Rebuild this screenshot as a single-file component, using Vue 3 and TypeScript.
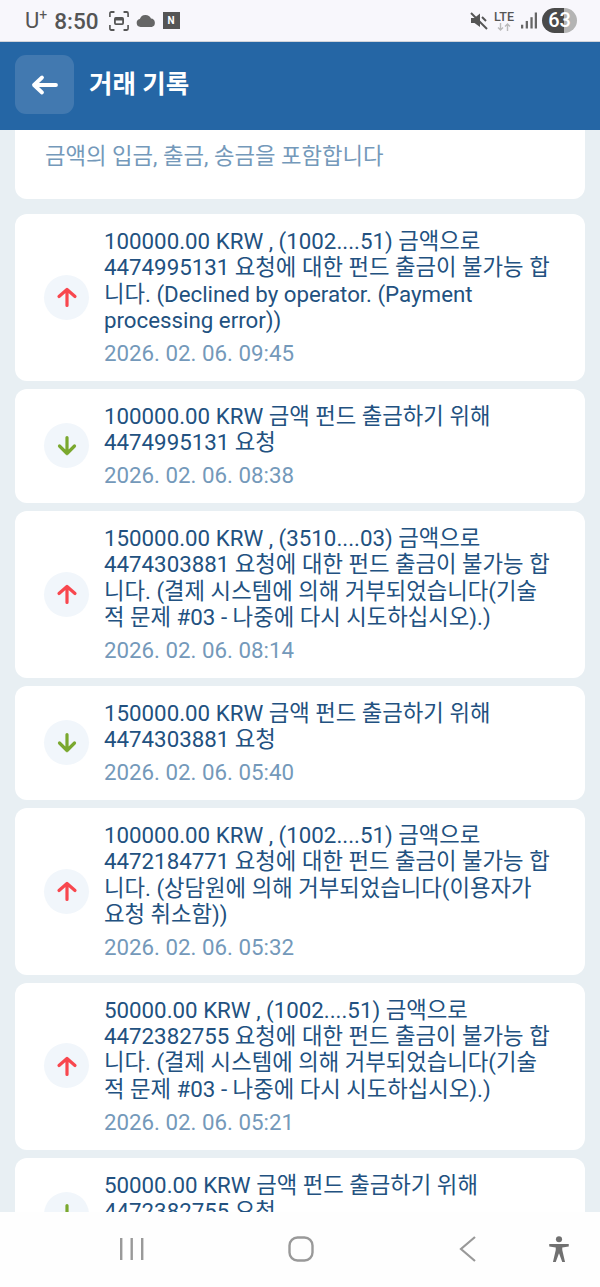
<script setup lang="ts">
interface Tx {
  kind: 'out' | 'in';
  text: string;
  date: string;
}

const items: Tx[] = [
  { kind: 'out', text: '100000.00 KRW , (1002....51) 금액으로 4474995131 요청에 대한 펀드 출금이 불가능 합니다. (Declined by operator. (Payment processing error))', date: '2026. 02. 06. 09:45' },
  { kind: 'in', text: '100000.00 KRW 금액 펀드 출금하기 위해 4474995131 요청', date: '2026. 02. 06. 08:38' },
  { kind: 'out', text: '150000.00 KRW , (3510....03) 금액으로 4474303881 요청에 대한 펀드 출금이 불가능 합니다. (결제 시스템에 의해 거부되었습니다(기술적 문제 #03 - 나중에 다시 시도하십시오).)', date: '2026. 02. 06. 08:14' },
  { kind: 'in', text: '150000.00 KRW 금액 펀드 출금하기 위해 4474303881 요청', date: '2026. 02. 06. 05:40' },
  { kind: 'out', text: '100000.00 KRW , (1002....51) 금액으로 4472184771 요청에 대한 펀드 출금이 불가능 합니다. (상담원에 의해 거부되었습니다(이용자가 요청 취소함))', date: '2026. 02. 06. 05:32' },
  { kind: 'out', text: '50000.00 KRW , (1002....51) 금액으로 4472382755 요청에 대한 펀드 출금이 불가능 합니다. (결제 시스템에 의해 거부되었습니다(기술적 문제 #03 - 나중에 다시 시도하십시오).)', date: '2026. 02. 06. 05:21' },
  { kind: 'in', text: '50000.00 KRW 금액 펀드 출금하기 위해 4472382755 요청', date: '2026. 02. 06. 05:10' },
];
</script>

<template>
  <div class="screen">
    <div class="status">
      <div class="status-left">
        <span class="carrier">U<sup>+</sup></span>
        <span class="clock">8:50</span>
        <svg class="ic" width="20" height="20" viewBox="0 0 22 20" preserveAspectRatio="none" fill="none" stroke="#555" stroke-width="1.8">
          <path d="M1 6V2.500Q1 1 2.500 1H6M16 1h3.500Q21 1 21 2.500V6M21 14v3.500Q21 19 19.500 19H16M6 19H2.500Q1 19 1 17.500V14" />
          <rect x="5.500" y="6" width="11" height="8" rx="2" fill="#555" stroke="none" />
          <rect x="7.500" y="9.500" width="7" height="2.800" fill="#f8f7fc" stroke="none" />
        </svg>
        <svg class="ic" width="20" height="13" viewBox="0 0 20 13">
          <path d="M4.500 13A4 4 0 0 1 3.800 5.100 6 6 0 0 1 15 4.600 4.300 4.300 0 0 1 15.800 13Z" fill="#666" />
        </svg>
        <span class="n-badge">N</span>
      </div>
      <div class="status-right">
        <svg width="18" height="18" viewBox="0 0 18 18">
          <path d="M1 6h3.500L10 1.500V15L4.500 11H1Z" fill="#555" />
          <path d="M1 1l16 16" stroke="#555" stroke-width="2" />
          <path d="M12 5l4 4" stroke="#555" stroke-width="2" />
        </svg>
        <div class="lte">
          <span>LTE</span>
          <svg width="14" height="8" viewBox="0 0 14 8" fill="none" stroke="#bbb" stroke-width="1.400">
            <path d="M3.500 0v7M1 4.500l2.500 2.500L6 4.500M10.500 8V1M8 3.500L10.500 1 13 3.500" />
          </svg>
        </div>
        <svg width="16" height="17" viewBox="0 0 17 17" fill="#666">
          <rect x="0" y="13" width="2.400" height="4" />
          <rect x="5" y="9" width="2.400" height="8" />
          <rect x="10" y="5" width="2.400" height="12" />
          <rect x="14.600" y="0" width="2.400" height="17" />
        </svg>
        <div class="battery">63</div>
      </div>
    </div>

    <header class="topbar">
      <button class="back" type="button">
        <svg width="28" height="22" viewBox="0 0 28 22" fill="none" stroke="#fff" stroke-width="3.800" stroke-linecap="round" stroke-linejoin="round">
          <path d="M25 11H3M11 3.500L3 11l8 7.500" />
        </svg>
      </button>
      <h1 class="title">거래 기록</h1>
    </header>

    <main class="list">
      <section class="card intro">금액의 입금, 출금, 송금을 포함합니다</section>
      <article v-for="(item, i) in items" :key="i" class="card tx">
        <div class="badge">
          <svg v-if="item.kind === 'out'" width="22" height="22" viewBox="0 0 22 22" fill="none" stroke="#f8474e" stroke-width="3.200" stroke-linecap="round" stroke-linejoin="round">
            <path d="M11 19.500V3.500M3 10.500l8-7 8 7" />
          </svg>
          <svg v-else width="22" height="22" viewBox="0 0 22 22" fill="none" stroke="#7aa82e" stroke-width="3.200" stroke-linecap="round" stroke-linejoin="round">
            <path d="M11 2.500v16M3.500 11l7.500 7.500 7.500-7.500" />
          </svg>
        </div>
        <div class="body">
          <p class="text">{{ item.text }}</p>
          <p class="date">{{ item.date }}</p>
        </div>
      </article>
    </main>

    <nav class="navbar">
      <svg width="26" height="24" viewBox="0 0 26 24" fill="#999">
        <rect x="1" y="1" width="2.400" height="22" />
        <rect x="11.500" y="1" width="2.400" height="22" />
        <rect x="22" y="1" width="2.400" height="22" />
      </svg>
      <svg class="nav-home" width="26" height="26" viewBox="0 0 26 26" fill="none" stroke="#999" stroke-width="2.400">
        <rect x="1.500" y="1.500" width="23" height="23" rx="8" />
      </svg>
      <svg class="nav-back" width="18" height="26" viewBox="0 0 18 26" fill="none" stroke="#999" stroke-width="2.200">
        <path d="M16 1L2 13l14 12" />
      </svg>
      <svg class="nav-person" width="22" height="26" viewBox="0 0 22 28" fill="#707070">
        <circle cx="11" cy="3.500" r="3.300" />
        <path d="M0.500 8.500h21v2.800l-7 1.200V15l3 13h-3L11 18.500 7.500 28h-3l3-13v-2.500l-7-1.200Z" />
      </svg>
    </nav>
  </div>
</template>

<style scoped>
.screen {
  width: 600px;
  height: 1287px;
  display: flex;
  flex-direction: column;
  overflow: hidden;
  background: #e8eff3;
  font-family: Roboto, "Noto Sans CJK KR", sans-serif;
}

.status {
  height: 42px;
  flex: none;
  box-sizing: border-box;
  padding: 0 23px 0 25px;
  display: flex;
  align-items: center;
  justify-content: space-between;
  background: #f8f7fc;
  border-bottom: 1px solid #d0d3da;
  color: #555;
}

.status-left,
.status-right {
  display: flex;
  align-items: center;
}

.carrier {
  font-size: 22px;
  line-height: 26px;
}

.carrier sup {
  font-size: 14px;
  line-height: 0;
  vertical-align: 8px;
}

.clock {
  margin-left: 7px;
  margin-right: 10px;
  font-size: 22.500px;
  font-weight: 500;
}

.ic {
  margin-right: 7px;
}

.n-badge {
  width: 17px;
  height: 17px;
  background: #555;
  color: #fff;
  font-size: 10px;
  font-weight: 700;
  line-height: 17px;
  text-align: center;
}

.status-right {
  gap: 6px;
}

.lte {
  display: flex;
  flex-direction: column;
  align-items: center;
  width: 20px;
  margin-right: 1px;
  font-size: 12.500px;
  font-weight: 500;
  line-height: 12px;
}

.battery {
  width: 35px;
  height: 25px;
  margin-left: -1px;
  border-radius: 13px;
  background: linear-gradient(90deg, #4a4a4a 0 63%, #b4b4b4 63%);
  color: #fff;
  font-size: 20px;
  font-weight: 500;
  line-height: 25px;
  text-align: center;
}

.topbar {
  height: 88px;
  flex: none;
  box-sizing: border-box;
  padding: 13px 15px 0;
  display: flex;
  align-items: flex-start;
  background: #2566a5;
}

.back {
  width: 59px;
  height: 59px;
  flex: none;
  padding: 0;
  display: flex;
  align-items: center;
  justify-content: center;
  border: none;
  border-radius: 11px;
  background: #4279b0;
}

.title {
  margin: 0 0 0 15px;
  color: #fff;
  font-size: 25.500px;
  font-weight: 700;
  line-height: 58px;
}

.list {
  flex: 1;
  min-height: 0;
  overflow: hidden;
  padding: 0 15px;
}

.card {
  background: #fff;
  border-radius: 12px;
}

.intro {
  box-sizing: border-box;
  height: 69px;
  margin-bottom: 15px;
  padding: 10px 30px 0;
  border-top-left-radius: 0;
  border-top-right-radius: 0;
  color: #7499ba;
  font-size: 22.300px;
  line-height: 32px;
}

.tx {
  display: flex;
  align-items: center;
  margin-bottom: 8px;
  padding: 14px 33px 14.600px 30px;
}

.badge {
  width: 45px;
  height: 45px;
  margin-left: -1px;
  flex: none;
  display: flex;
  align-items: center;
  justify-content: center;
  border-radius: 50%;
  background: #f1f6fb;
}

.body {
  flex: 1;
  min-width: 0;
  margin-left: 15px;
}

.text {
  margin: 0;
  color: #225180;
  font-size: 22.300px;
  line-height: 26.300px;
}

.date {
  margin: 7px 0 0;
  color: #7499ba;
  font-size: 22.300px;
  line-height: 26px;
}

.navbar {
  height: 75px;
  flex: none;
  box-sizing: border-box;
  padding: 0 28px 2px 119px;
  display: flex;
  align-items: center;
  background: #fefefe;
}

.nav-home {
  margin-left: 143px;
}

.nav-back {
  margin-left: 145px;
}

.nav-person {
  margin-left: 71px;
}
</style>
